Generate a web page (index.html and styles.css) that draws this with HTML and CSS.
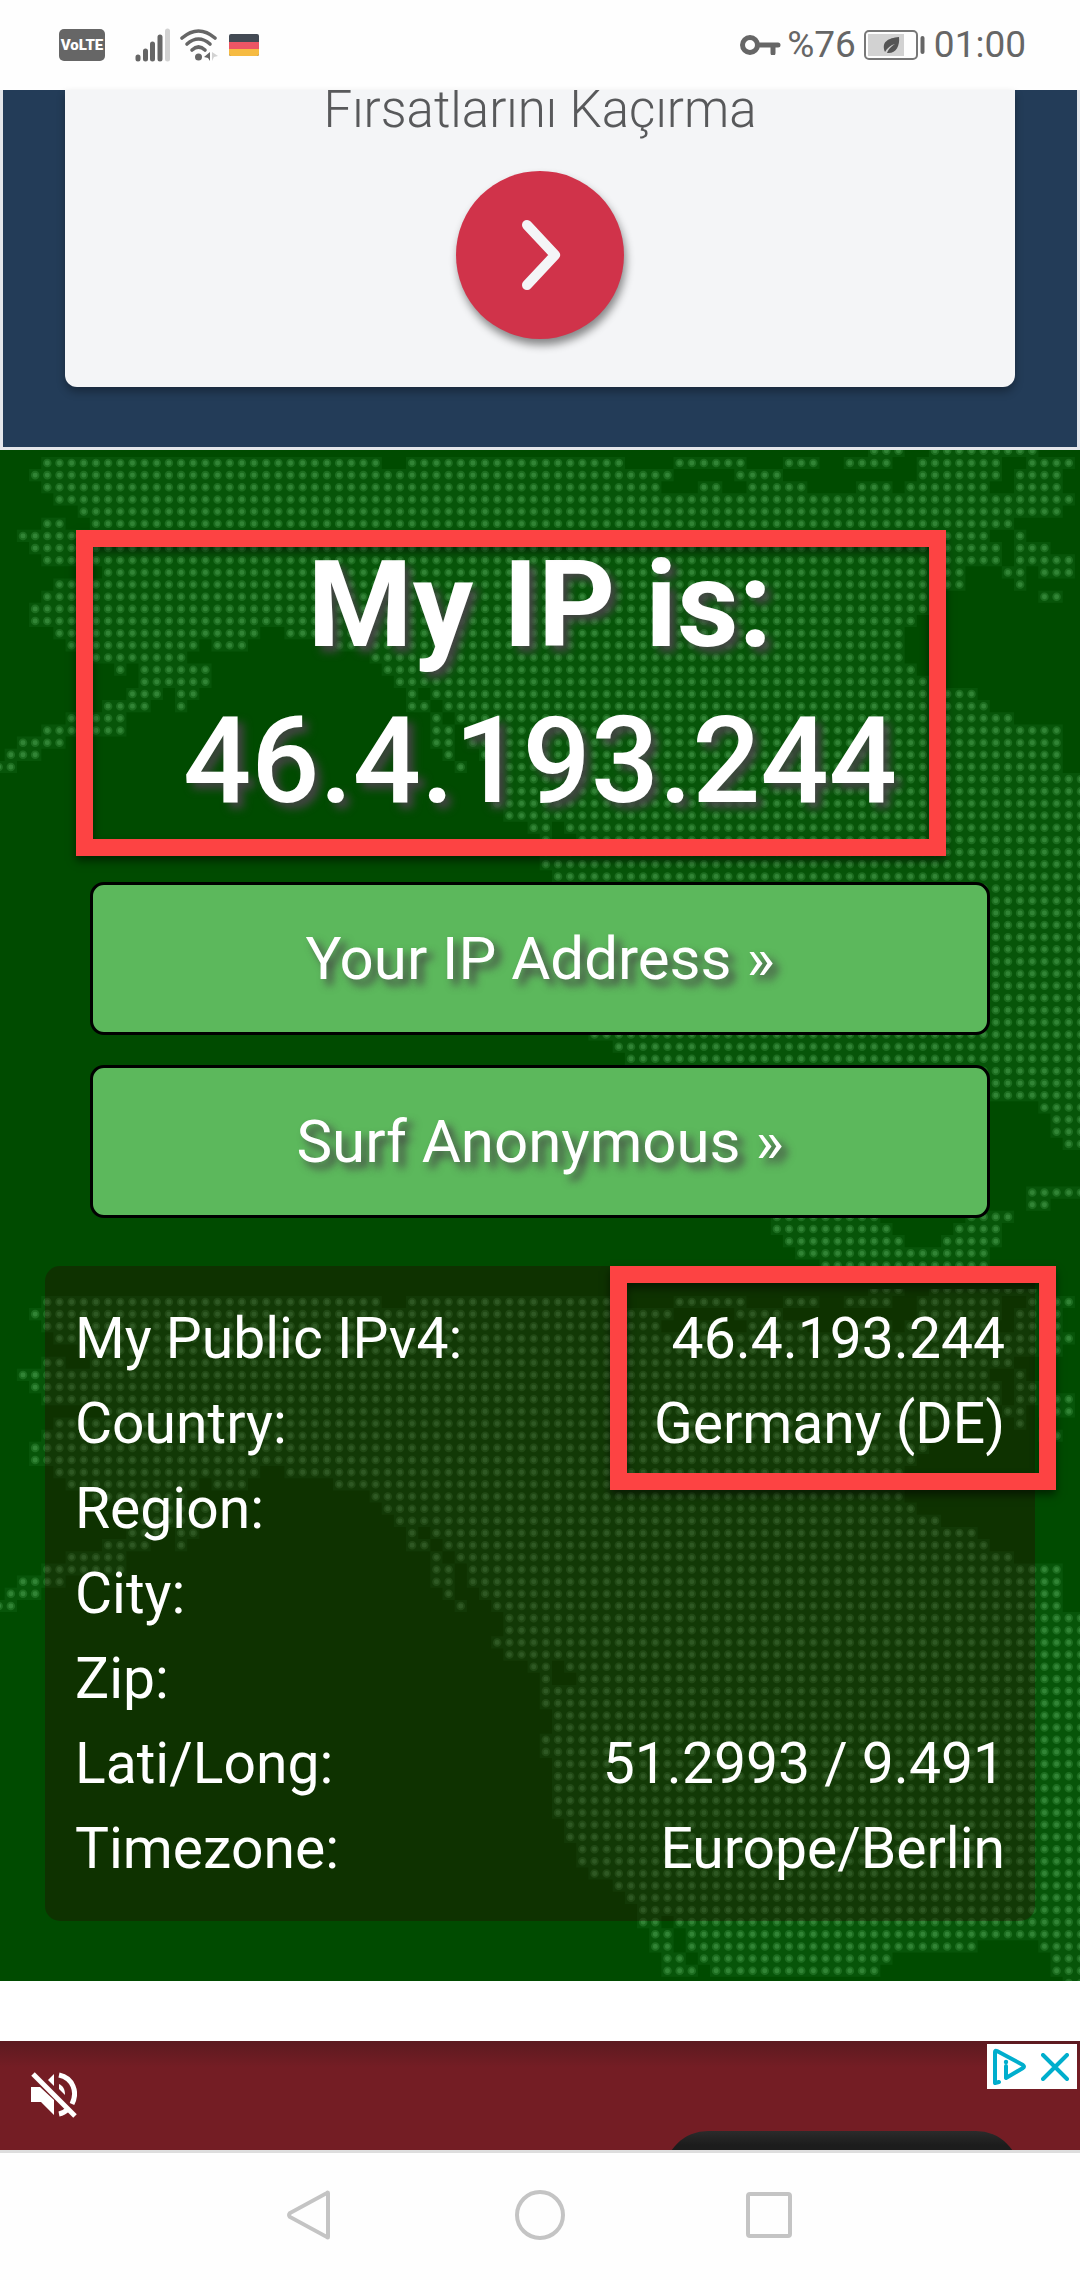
FILE: index.html
```
<!DOCTYPE html>
<html lang="en">
<head>
    <meta charset="UTF-8">
    <meta name="viewport" content="width=device-width, initial-scale=1.0">
    <title>My IP is: 46.4.193.244</title>
    <link rel="stylesheet" href="styles.css">
</head>
<body>
    <!-- Phone status bar -->
    <header class="status-bar">
        <div class="status-left">
            <span class="volte">VoLTE</span>
            <svg class="signal" width="36" height="34" viewBox="0 0 36 34" aria-hidden="true">
                <g fill="none" stroke="#666" stroke-width="5" stroke-linecap="round">
                    <path d="M3 29v2M10.500 23v8M17.500 16v15M25 9v22"/>
                    <path stroke="#d2d2d2" d="M32.500 3v28"/>
                </g>
            </svg>
            <svg class="wifi" width="40" height="34" viewBox="0 0 40 34" aria-hidden="true">
                <g fill="none" stroke="#666" stroke-width="3.600" stroke-linecap="round">
                    <path d="M3 10Q19.500-4 36 10"/>
                    <path d="M8 16Q19.500 6 31 16"/>
                    <path d="M13 22Q19.500 16 26 22"/>
                </g>
                <circle cx="19.500" cy="29" r="3.500" fill="#666"/>
                <path d="M31 24v9l-2-3-4-1z" fill="#666"/>
                <path d="M33 24v9l2-4 4-1z" fill="#d2d2d2"/>
            </svg>
            <svg class="flag" width="30" height="22" viewBox="0 0 30 22" aria-hidden="true">
                <rect width="30" height="22" rx="2" fill="#434a54"/>
                <path d="M0 8h30v7H0z" fill="#ed5565"/>
                <path d="M0 15h30v5a2 2 0 0 1-2 2H2a2 2 0 0 1-2-2z" fill="#f6bb42"/>
            </svg>
        </div>
        <div class="status-right">
            <svg width="42" height="20" viewBox="0 0 42 20" aria-hidden="true">
                <circle cx="10" cy="10" r="7.500" fill="none" stroke="#666" stroke-width="5"/>
                <path d="M18 10h20M33 10v8" fill="none" stroke="#666" stroke-width="5" stroke-linecap="round"/>
            </svg>
            <span class="percent">%76</span>
            <svg class="battery" width="62" height="30" viewBox="0 0 62 30" aria-hidden="true">
                <rect x="1" y="1" width="52" height="28" rx="4" fill="none" stroke="#777" stroke-width="2"/>
                <path d="M4 4h36v22H4z" fill="#d2d2d2"/>
                <path d="M35 7c1 9-3 17-12 16 2-5 5-7 8-9-4 1-8 4-10 8-4-10 3-14 14-15z" fill="#555"/>
                <path d="M58.500 8v14" stroke="#666" stroke-width="4" stroke-linecap="round"/>
            </svg>
            <span>01:00</span>
        </div>
    </header>

    <!-- Top ad -->
    <section class="ad-top">
        <div class="ad-card">
            <p class="ad-text">Fırsatlarını Kaçırma</p>
            <button class="ad-button" type="button" aria-label="Next">
                <svg width="42" height="72" viewBox="0 0 42 72" aria-hidden="true">
                    <path d="M8 6l28 30L8 66" fill="none" stroke="#f4f5f7" stroke-width="10" stroke-linecap="round" stroke-linejoin="round"/>
                </svg>
            </button>
        </div>
    </section>

    <main class="hero">
        <!-- Dotted map, one dot for each unit of a row -->
        <svg class="map" width="100%" height="100%" aria-hidden="true">
            <defs>
                <path id="rows" d="M72 0h3M77 0h9
                    M4 1h28M34 1h18M56 1h6M65 1h3M70 1h4M76 1h7M85 1h4
                    M3 2h53M61 2h4M76 2h7M84 2h4
                    M4 3h51M58 3h2M62 3h5M71 3h3M75 3h7M84 3h4
                    M5 4h84
                    M7 5h81
                    M4 6h2M8 6h76
                    M2 7h80M84 7h1
                    M3 8h80M84 8h3
                    M4 9h79M84 9h5
                    M9 10h71M83 10h2M86 10h3
                    M5 11h75M84 11h1
                    M4 12h73M86 12h2
                    M3 13h74
                    M3 14h73
                    M5 15h17M24 15h51
                    M6 16h11M18 16h3M28 16h47
                    M8 17h8M31 17h44
                    M10 18h1M12 18h6M32 18h44
                    M12 19h6M33 19h45
                    M11 20h3M15 20h2M34 20h1M36 20h45
                    M9 21h4M15 21h1M34 21h2M37 21h45
                    M6 22h5M36 22h1M38 22h46
                    M4 23h7M36 23h2M39 23h49
                    M2 24h4M36 24h2M39 24h49
                    M1 25h3M37 25h1M40 25h48
                    M0 26h2M38 26h1M41 26h47
                    M42 27h48M42 28h48M41 29h49M42 30h48
                    M44 31h2M47 31h43M45 32h1M48 32h42
                    M45 33h45M45 34h45M46 35h44M46 36h44
                    M45 37h45M45 38h45M46 39h44M46 40h44
                    M46 41h44M46 42h44M46 43h44M47 44h43
                    M47 45h43M48 46h42M48 47h42M49 48h41
                    M51 49h39M52 50h38M53 51h37
                    M53 52h2M56 52h34
                    M54 53h2M57 53h33
                    M54 54h2M57 54h24M86 54h4
                    M55 55h2M58 55h16M87 55h3
                    M55 56h3M59 56h14M87 56h3
                    M88 57h2
                    M85 61h5M85 62h2
                    M64 63h9M80 63h4
                    M64 64h10M79 64h4
                    M65 65h10M78 65h5
                    M66 66h16M68 67h14"/>
                <pattern id="map" width="1080" height="839" patternUnits="userSpaceOnUse">
                    <g transform="translate(-7.400 .800) scale(12.160)" fill="none">
                        <use class="land" href="#rows"/>
                        <use class="dots glow" href="#rows"/>
                        <use class="dots" href="#rows"/>
                    </g>
                </pattern>
            </defs>
            <rect width="100%" height="100%" fill="url(#map)"/>
        </svg>

        <div class="ip-title">
            <h1>My IP is: <span>46.4.193.244</span></h1>
            <div class="frame frame-title"></div>
        </div>

        <nav class="links">
            <a class="btn" href="#">Your IP Address »</a>
            <a class="btn" href="#">Surf Anonymous »</a>
        </nav>

        <div class="details">
            <table>
                <tr><th scope="row">My Public IPv4:</th><td>46.4.193.244</td></tr>
                <tr><th scope="row">Country:</th><td>Germany (DE)</td></tr>
                <tr><th scope="row">Region:</th><td></td></tr>
                <tr><th scope="row">City:</th><td></td></tr>
                <tr><th scope="row">Zip:</th><td></td></tr>
                <tr><th scope="row">Lati/Long:</th><td>51.2993 / 9.491</td></tr>
                <tr><th scope="row">Timezone:</th><td>Europe/Berlin</td></tr>
            </table>
            <div class="frame frame-details"></div>
        </div>
    </main>

    <!-- Video ad -->
    <section class="ad-video">
        <button class="mute" type="button" aria-label="Unmute">
            <svg width="46" height="46" viewBox="0 0 46 46" aria-hidden="true">
                <path d="M0 15h9l14 13v15L10 30H0z" fill="#fff"/>
                <path d="M17 8l6-6v12z" fill="#fff"/>
                <path d="M28 12c4 2 6 5 6 11l-6-6z" fill="#fff"/>
                <path d="M28 3c14 3 19 17 13 29M28 42q5-1 9-5" fill="none" stroke="#fff" stroke-width="5"/>
                <path d="M2 2l42 42" stroke="#fff" stroke-width="5"/>
            </svg>
        </button>
        <div class="phone-edge"></div>
        <div class="ad-choices">
            <button type="button" aria-label="Ad information">
                <svg width="36" height="37" viewBox="0 0 36 37" aria-hidden="true">
                    <g fill="none" stroke="#00aecd" stroke-width="4" stroke-linecap="round" stroke-linejoin="round">
                        <path d="M8 34l-4 1V4q0-2 2-1l26 14q2 1.500 0 3L15 30V18"/>
                    </g>
                    <circle cx="15" cy="14" r="2.200" fill="#00aecd"/>
                </svg>
            </button>
            <button type="button" aria-label="Close ad">
                <svg width="28" height="28" viewBox="0 0 28 28" aria-hidden="true">
                    <path d="M2 2l24 24M26 2L2 26" stroke="#00aecd" stroke-width="4" stroke-linecap="round"/>
                </svg>
            </button>
        </div>
    </section>

    <!-- Phone navigation bar -->
    <footer class="nav-bar">
        <button type="button" aria-label="Back">
            <svg width="50" height="50" viewBox="0 0 50 50" aria-hidden="true">
                <path d="M43 3v44q0 1-1 0L5 27q-2-2 0-4L42 3q1-1 1 0z"/>
            </svg>
        </button>
        <button type="button" aria-label="Home">
            <svg width="50" height="50" viewBox="0 0 50 50" aria-hidden="true">
                <circle cx="25" cy="25" r="23"/>
            </svg>
        </button>
        <button type="button" aria-label="Recent apps">
            <svg width="50" height="50" viewBox="0 0 50 50" aria-hidden="true">
                <rect x="3" y="4" width="42" height="42" rx="2"/>
            </svg>
        </button>
    </footer>
</body>
</html>
```
FILE: styles.css
```
* {
    box-sizing: border-box;
}

body {
    margin: 0;
    min-height: 100vh;
    display: flex;
    flex-direction: column;
    font-family: Roboto, "Liberation Sans", sans-serif;
    background-color: #fff;
}

button {
    padding: 0;
    border: none;
    background: none;
    cursor: pointer;
}

svg {
    display: block;
}

/* Status bar */
.status-bar {
    height: 90px;
    padding: 0 54px 0 59px;
    display: flex;
    align-items: center;
    justify-content: space-between;
    color: #666;
    font-size: 37px;
    line-height: 44px;
    background-color: #fefefe;
}

.status-left,
.status-right {
    display: flex;
    align-items: center;
}

.volte {
    width: 46px;
    border-radius: 5px;
    background-color: #666;
    color: #fff;
    font-size: 15px;
    font-weight: 900;
    line-height: 32px;
    text-align: center;
}

.signal {
    margin-left: 30px;
}

.wifi {
    margin-left: 8px;
}

.flag {
    margin-left: 10px;
}

.percent {
    margin-left: 5px;
}

.battery {
    margin: 0 8px;
}

/* Top ad */
.ad-top {
    padding: 0 62px 60px;
    border: 3px solid #e4e6ea;
    border-top: none;
    background-color: #233c58;
}

.ad-card {
    height: 297px;
    overflow: hidden;
    display: flex;
    flex-direction: column;
    align-items: center;
    border-radius: 0 0 12px 12px;
    background-color: #f4f5f7;
    box-shadow: 0 5px 8px rgba(0, 0, 0, 0.3);
}

.ad-text {
    margin: -12px 0 29px;
    color: #58595b;
    font-size: 51px;
    font-weight: 300;
    line-height: 64px;
}

.ad-button {
    flex: none;
    width: 168px;
    height: 168px;
    display: flex;
    align-items: center;
    justify-content: center;
    border-radius: 50%;
    background-color: #d0334a;
    box-shadow: 2px 6px 8px rgba(0, 0, 0, 0.45);
}

/* Green section */
.hero {
    position: relative;
    padding: 77px 45px 60px;
    background-color: #004b00;
    color: #fff;
}

.map {
    position: absolute;
    inset: 0;
}

.land {
    stroke: rgba(50, 140, 60, 0.15);
    stroke-width: 1;
}

.dots {
    stroke: rgba(70, 155, 75, 0.5);
    stroke-width: 0.4;
    stroke-linecap: round;
    stroke-dasharray: 0 1;
    stroke-dashoffset: 0.5;
}

.glow {
    stroke: rgba(60, 145, 65, 0.4);
    stroke-width: 0.7;
}

.ip-title,
.links,
.details {
    position: relative;
}

h1 {
    margin: 0;
    font-size: 120px;
    font-weight: 700;
    line-height: 156px;
    text-align: center;
    text-shadow: 6px 6px 8px #444;
}

h1 span {
    display: block;
    font-weight: 500;
}

/* Red frames around the address */
.frame {
    position: absolute;
    border: 17px solid #fd4343;
    box-shadow: 0 5px 8px rgba(0, 0, 0, 0.5), inset 0 5px 8px rgba(0, 0, 0, 0.5);
}

.frame-title {
    top: 3px;
    right: 89px;
    bottom: -17px;
    left: 31px;
}

.frame-details {
    top: 0;
    right: -21px;
    width: 446px;
    height: 224px;
}

.links {
    margin: 43px 45px 48px;
    display: flex;
    flex-direction: column;
    gap: 30px;
}

.btn {
    border: 3px solid #000;
    border-radius: 14px;
    background-color: #5cb85c;
    color: #fff;
    font-size: 60px;
    line-height: 147px;
    text-align: center;
    text-decoration: none;
    text-shadow: 6px 6px 8px #444;
}

.details {
    padding: 30px;
    border-radius: 15px;
    background-color: rgba(42, 0, 0, 0.33);
}

table {
    width: 100%;
    border-collapse: collapse;
    font-size: 57px;
    line-height: 85px;
}

th,
td {
    padding: 0;
    font-weight: 400;
    text-align: left;
}

td {
    text-align: right;
}

/* Video ad */
.ad-video {
    position: relative;
    height: 112px;
    margin-top: 60px;
    padding: 31px;
    overflow: hidden;
    border-bottom: 3px solid #ddd;
    background: linear-gradient(#5c1a20, #741d24 26px);
}

.phone-edge {
    position: absolute;
    top: 90px;
    right: 60px;
    width: 356px;
    height: 60px;
    border-radius: 44px 44px 0 0;
    background: linear-gradient(#2b2b2b, #1c1c1c 14px);
}

.ad-choices {
    position: absolute;
    top: 3px;
    right: 3px;
    width: 90px;
    height: 45px;
    padding: 0 8px 0 4px;
    display: flex;
    align-items: center;
    justify-content: space-between;
    background-color: #fff;
}

/* Navigation bar */
.nav-bar {
    flex: 1;
    min-height: 127px;
    padding-bottom: 3px;
    display: flex;
    align-items: center;
    justify-content: center;
    gap: 180px;
    background-color: #fefefe;
}

.nav-bar svg {
    fill: none;
    stroke: #c4c4c4;
    stroke-width: 4;
}
```
